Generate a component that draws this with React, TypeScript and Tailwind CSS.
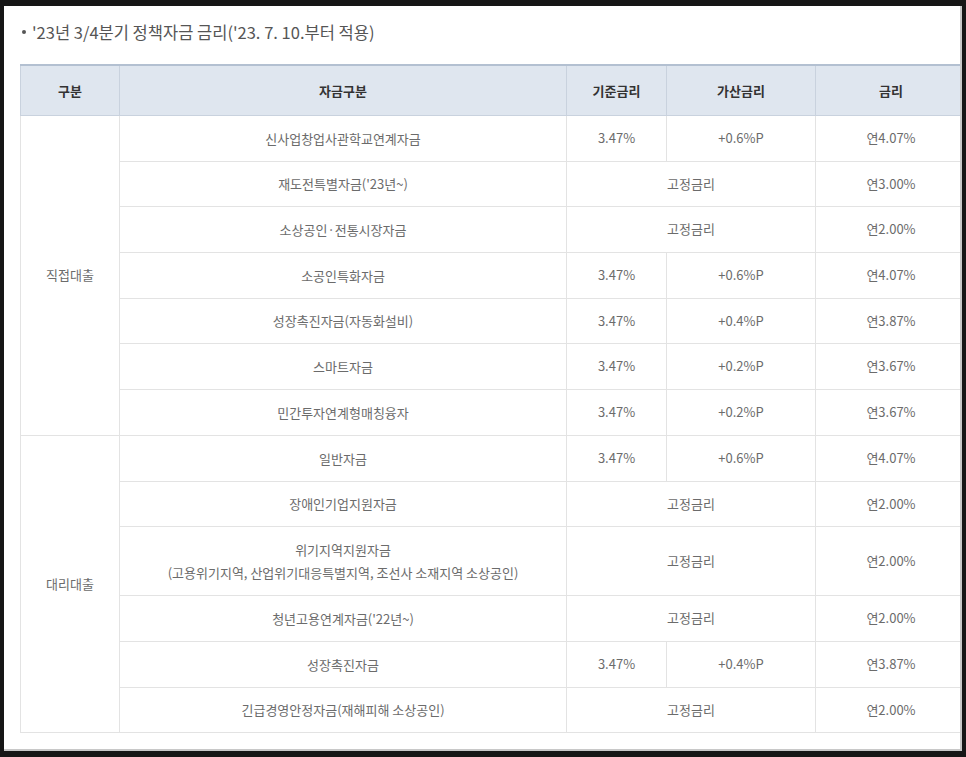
import React from "react";

type Row = {
    name: React.ReactNode;
    base?: string;
    add?: string;
    rate: string;
    h: number;
};

const direct: Row[] = [
    { name: "신사업창업사관학교연계자금", base: "3.47%", add: "+0.6%P", rate: "연4.07%", h: 46 },
    { name: "재도전특별자금('23년~)", rate: "연3.00%", h: 45 },
    { name: "소상공인·전통시장자금", rate: "연2.00%", h: 46 },
    { name: "소공인특화자금", base: "3.47%", add: "+0.6%P", rate: "연4.07%", h: 46 },
    { name: "성장촉진자금(자동화설비)", base: "3.47%", add: "+0.4%P", rate: "연3.87%", h: 45 },
    { name: "스마트자금", base: "3.47%", add: "+0.2%P", rate: "연3.67%", h: 46 },
    { name: "민간투자연계형매칭융자", base: "3.47%", add: "+0.2%P", rate: "연3.67%", h: 46 },
];

const agency: Row[] = [
    { name: "일반자금", base: "3.47%", add: "+0.6%P", rate: "연4.07%", h: 46 },
    { name: "장애인기업지원자금", rate: "연2.00%", h: 45 },
    {
        name: (
            <>
                위기지역지원자금
                <br />
                (고용위기지역, 산업위기대응특별지역, 조선사 소재지역 소상공인)
            </>
        ),
        rate: "연2.00%",
        h: 69,
    },
    { name: "청년고용연계자금('22년~)", rate: "연2.00%", h: 46 },
    { name: "성장촉진자금", base: "3.47%", add: "+0.4%P", rate: "연3.87%", h: 46 },
    { name: "긴급경영안정자금(재해피해 소상공인)", rate: "연2.00%", h: 45 },
];

const td = "border border-[#e3e3e3] text-center align-middle p-0";
const th = "border border-[#c9d2de] border-t-[#b3c0d1] border-t-2";

const Group = ({ label, rows }: { label: string; rows: Row[] }) => (
    <>
        {rows.map((r, i) => (
            <tr key={i} style={{ height: r.h }}>
                {i === 0 && (
                    <td rowSpan={rows.length} className={td}>
                        {label}
                    </td>
                )}
                <td className={`${td} leading-[23px]`}>{r.name}</td>
                {r.base ? (
                    <>
                        <td className={td}>{r.base}</td>
                        <td className={td}>{r.add}</td>
                    </>
                ) : (
                    <td colSpan={2} className={td}>
                        고정금리
                    </td>
                )}
                <td className={td}>{r.rate}</td>
            </tr>
        ))}
    </>
);

export default function App() {
    return (
        <div className="w-[966px] h-[757px] bg-[#161616] pt-[6px] pl-[4px] font-['Noto_Sans_CJK_KR',sans-serif]">
            <div className="w-[958px] h-[745px] bg-white border-r-2 border-b-2 border-[#c8c8c8] overflow-hidden pl-[16px]">
                <p className="pt-[14px] text-[16.5px] text-[#555] leading-[24px] flex items-center">
                    <span className="inline-block w-[4px] h-[4px] rounded-full bg-[#555] ml-[2px] mr-[6px]" />
                    '23년 3/4분기 정책자금 금리('23. 7. 10.부터 적용)
                </p>
                <table className="mt-[20px] w-[946px] border-collapse table-fixed text-[13px] text-[#6b6b6b]">
                    <colgroup>
                        <col className="w-[99px]" />
                        <col className="w-[447px]" />
                        <col className="w-[100px]" />
                        <col className="w-[149px]" />
                        <col className="w-[151px]" />
                    </colgroup>
                    <thead>
                        <tr className="h-[50px] bg-[#dfe6ef] text-[#333] font-bold">
                            <th className={th}>구분</th>
                            <th className={th}>자금구분</th>
                            <th className={th}>기준금리</th>
                            <th className={th}>가산금리</th>
                            <th className={th}>금리</th>
                        </tr>
                    </thead>
                    <tbody>
                        <Group label="직접대출" rows={direct} />
                        <Group label="대리대출" rows={agency} />
                    </tbody>
                </table>
            </div>
        </div>
    );
}
